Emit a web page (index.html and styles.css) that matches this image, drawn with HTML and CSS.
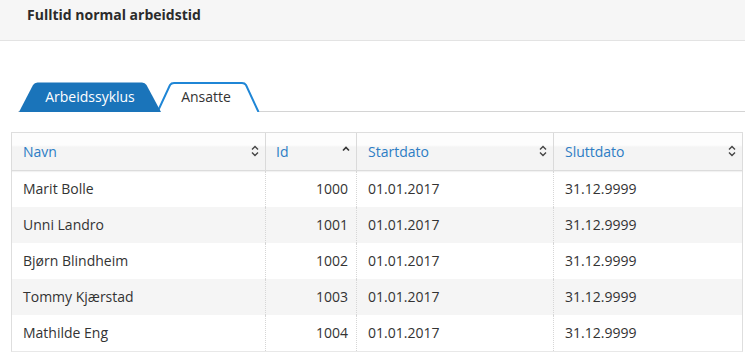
FILE: index.html
```html
<!DOCTYPE html>
<html lang="no">
<head>
<meta charset="utf-8">
<title>Fulltid normal arbeidstid</title>
<link rel="stylesheet" href="styles.css">
</head>
<body>
<header class="page-header">
  <h1 class="page-title">Fulltid normal arbeidstid</h1>
</header>
<nav class="tabs">
  <div class="tab tab-active">
    <svg class="tab-bg" viewBox="0 0 144 30" preserveAspectRatio="none"><path d="M1 30 L15 3 Q16.5 0.5 19.5 0.5 L124 0.5 Q127 0.5 128.5 3 L143 30 Z" fill="#1a74ba"/></svg>
    <span class="tab-label">Arbeidssyklus</span>
  </div>
  <div class="tab tab-inactive">
    <svg class="tab-bg" viewBox="0 0 104 30" preserveAspectRatio="none"><path d="M1.5 30 L14 3 Q15.3 1 18 1 L86 1 Q88.7 1 90 3 L102.5 30" fill="#fff" stroke="#1f86d6" stroke-width="2"/></svg>
    <span class="tab-label">Ansatte</span>
  </div>
</nav>
<div class="grid">
  <div class="grid-row grid-head">
    <div class="cell c-name"><span>Navn</span><svg class="sort" viewBox="0 0 8 12"><path d="M1 4.5 L4 1.5 L7 4.5 M1 7.5 L4 10.5 L7 7.5" fill="none" stroke="#444" stroke-width="1.4"/></svg></div>
    <div class="cell c-id"><span>Id</span><svg class="sort" viewBox="0 0 8 12"><path d="M1 5.5 L4 2.5 L7 5.5" fill="none" stroke="#333" stroke-width="1.6"/></svg></div>
    <div class="cell c-start"><span>Startdato</span><svg class="sort" viewBox="0 0 8 12"><path d="M1 4.5 L4 1.5 L7 4.5 M1 7.5 L4 10.5 L7 7.5" fill="none" stroke="#444" stroke-width="1.4"/></svg></div>
    <div class="cell c-end"><span>Sluttdato</span><svg class="sort" viewBox="0 0 8 12"><path d="M1 4.5 L4 1.5 L7 4.5 M1 7.5 L4 10.5 L7 7.5" fill="none" stroke="#444" stroke-width="1.4"/></svg></div>
  </div>
  <div class="grid-row">
    <div class="cell c-name">Marit Bolle</div><div class="cell c-id">1000</div><div class="cell c-start">01.01.2017</div><div class="cell c-end">31.12.9999</div>
  </div>
  <div class="grid-row alt">
    <div class="cell c-name">Unni Landro</div><div class="cell c-id">1001</div><div class="cell c-start">01.01.2017</div><div class="cell c-end">31.12.9999</div>
  </div>
  <div class="grid-row">
    <div class="cell c-name">Bjørn Blindheim</div><div class="cell c-id">1002</div><div class="cell c-start">01.01.2017</div><div class="cell c-end">31.12.9999</div>
  </div>
  <div class="grid-row alt">
    <div class="cell c-name">Tommy Kjærstad</div><div class="cell c-id">1003</div><div class="cell c-start">01.01.2017</div><div class="cell c-end">31.12.9999</div>
  </div>
  <div class="grid-row">
    <div class="cell c-name">Mathilde Eng</div><div class="cell c-id">1004</div><div class="cell c-start">01.01.2017</div><div class="cell c-end">31.12.9999</div>
  </div>
</div>
</body>
</html>
```

FILE: styles.css
```css
html, body {
  margin: 0;
  padding: 0;
  background: #fff;
}
body {
  font-family: "Open Sans", "Liberation Sans", sans-serif;
  font-size: 14px;
  color: #333;
  overflow: hidden;
}
.page-header {
  height: 40px;
  background: #f6f6f6;
  border-bottom: 1px solid #e3e3e3;
  padding: 0 0 0 27px;
  box-sizing: content-box;
}
.page-title {
  margin: 0;
  padding-top: 5px;
  font-size: 14px;
  font-weight: 700;
  color: #2b2b2b;
  line-height: 19px;
}
.tabs {
  display: flex;
  margin: 41px 0 0 18px;
  height: 29px;
  border-bottom: 1px solid #d4d4d4;
}
.tab {
  position: relative;
  height: 30px;
  display: flex;
  align-items: center;
  justify-content: center;
}
.tab-bg {
  position: absolute;
  left: 0;
  top: 0;
  width: 100%;
  height: 100%;
}
.tab-label {
  position: relative;
  font-size: 14px;
  line-height: 19px;
  padding-bottom: 2px;
}
.tab-active {
  width: 144px;
  color: #fff;
  z-index: 1;
}
.tab-inactive {
  width: 104px;
  margin-left: -6px;
  color: #333;
}
.tab-inactive .tab-label {
  margin-right: 4px;
}
.grid {
  margin: 20px 0 0 11px;
  width: 730px;
  border: 1px solid #dedede;
  border-bottom: 1px solid #e8e8e8;
}
.grid-row {
  display: flex;
  height: 36px;
}
.grid-row.alt {
  background: #f5f5f5;
}
.grid-head {
  height: 37px;
  background: linear-gradient(#fdfdfd 0, #fdfdfd 12px, #f4f4f4 14px, #f4f4f4 100%);
  border-bottom: 1px solid #dcdcdc;
  box-shadow: 0 1px 1px rgba(0,0,0,0.05);
}
.cell {
  display: flex;
  align-items: center;
  padding: 0 11px 1px;
  box-sizing: border-box;
  white-space: nowrap;
  border-left: 1px dotted #d6d6d6;
}
.grid-head .cell {
  justify-content: space-between;
  color: #2d7dc4;
  border-left: 1px solid #dadada;
  padding-right: 6px;
  padding-top: 0;
}
.cell:first-child,
.grid-head .cell:first-child {
  border-left: none;
}
.c-name { width: 253px; }
.c-id { width: 91px; justify-content: flex-end; padding-right: 8px; }
.c-start { width: 197px; }
.c-end { width: 189px; }
.grid-head .c-id { padding-left: 10px; padding-right: 6px; }
.grid-head .c-id span { margin-right: auto; }
.sort {
  width: 8px;
  height: 12px;
  flex: none;
}
```
